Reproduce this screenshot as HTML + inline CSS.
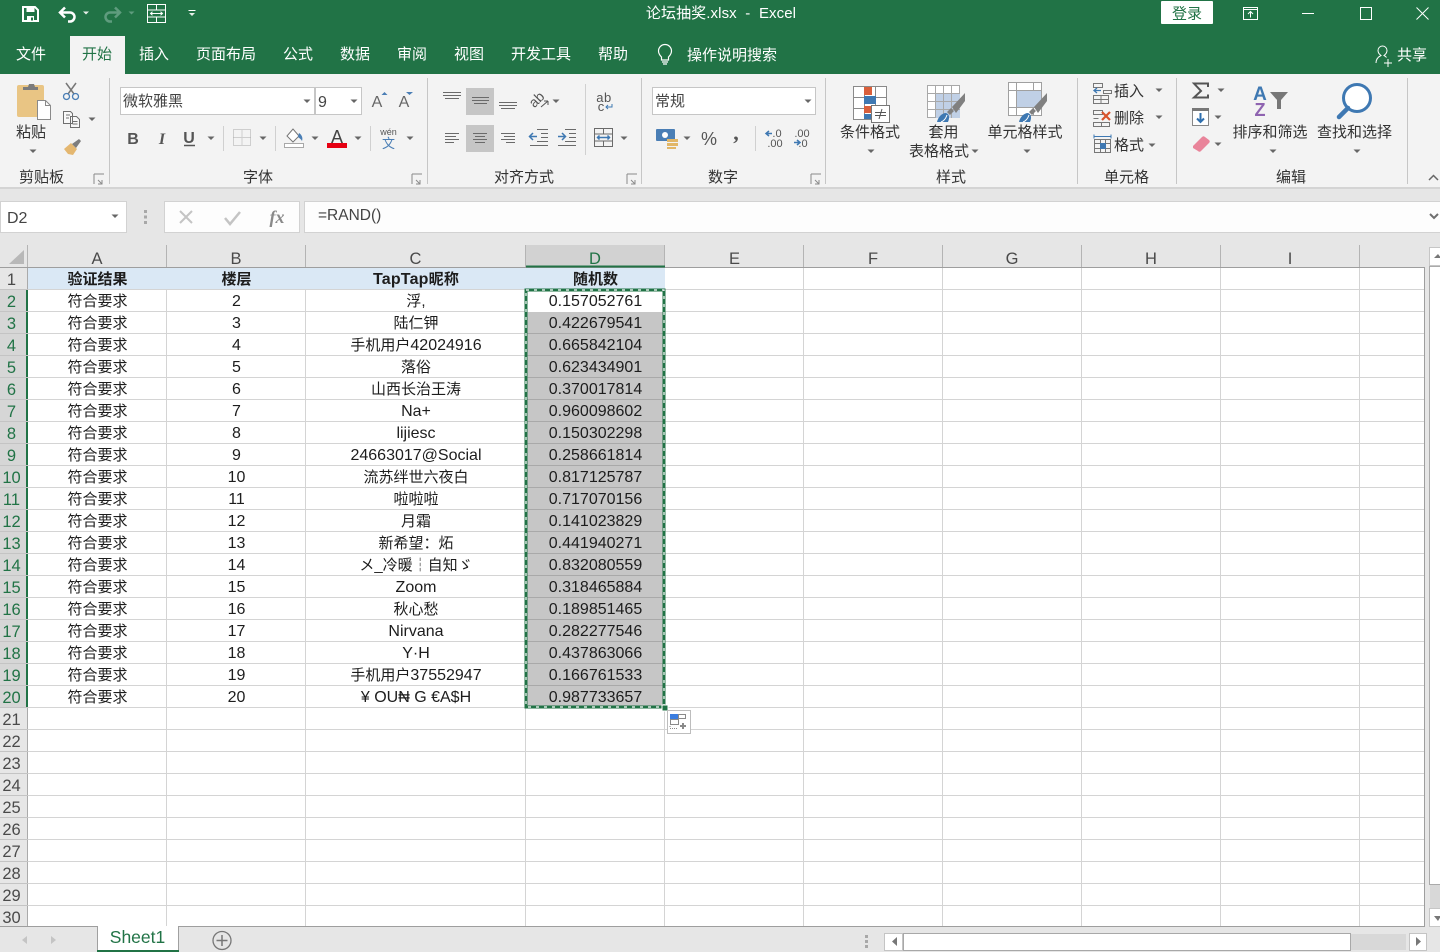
<!DOCTYPE html>
<html lang="zh"><head><meta charset="utf-8"><title>论坛抽奖.xlsx - Excel</title>
<style>
html,body{margin:0;padding:0;width:1440px;height:952px;overflow:hidden;background:#e6e6e6}
body{position:relative;font-family:"Liberation Sans","Noto Sans CJK SC",sans-serif}
div,table,svg{position:absolute}
#green{left:0;top:0;width:1440px;height:74px;background:#217346}
#ribbon{left:0;top:74px;width:1440px;height:113px;background:#f3f3f3;border-bottom:2px solid #d4d4d4}
#grid{left:28px;top:268px;width:1397px;height:659px;background-color:#fff;
background-image:linear-gradient(#d4d4d4,#d4d4d4),linear-gradient(#d4d4d4,#d4d4d4),linear-gradient(#d4d4d4,#d4d4d4),linear-gradient(#d4d4d4,#d4d4d4),linear-gradient(#d4d4d4,#d4d4d4),linear-gradient(#d4d4d4,#d4d4d4),linear-gradient(#d4d4d4,#d4d4d4),linear-gradient(#d4d4d4,#d4d4d4),linear-gradient(#d4d4d4,#d4d4d4),repeating-linear-gradient(to bottom,transparent 0,transparent 21px,#d4d4d4 21px,#d4d4d4 22px);
background-size:1px 100%,1px 100%,1px 100%,1px 100%,1px 100%,1px 100%,1px 100%,1px 100%,1px 100%,100% 100%;
background-position:138px 0,277px 0,497px 0,636px 0,775px 0,914px 0,1053px 0,1192px 0,1331px 0,0 0;background-repeat:no-repeat}
#bl{left:28px;top:268px;width:637px;height:21px;background:#dae8f5}
table{border-collapse:separate;border-spacing:0;table-layout:fixed}
#data{left:28px;top:268px;width:637px;color:#1d1d1d}
#data td{height:22px;padding:0;text-align:center;font-size:16px;line-height:21px;white-space:nowrap;overflow:hidden;box-sizing:border-box}
#data td.z,#data b{font-size:15px}
#data span{font-size:15px}
#data tr+tr td:nth-child(4){box-shadow:inset 0 -1px #a9a9a9;background:#c6c6c6}
#data tr:nth-child(2) td:nth-child(4){background:#fff;box-shadow:none}
#rh{left:0;top:0;width:28px;color:#4a4a4a}
#rh td{height:22px;padding:2px 5px 0 0;box-sizing:border-box;font-size:16.5px;line-height:20px;text-align:center;background:#e6e6e6;box-shadow:inset 0 -1px #c4c4c4,inset -1px 0 #aaa;overflow:visible;white-space:nowrap}
#rh tr.s td{background:#d6d6d6;color:#217346;box-shadow:inset 0 -1px #c4c4c4,inset -2px 0 #217346}
#clip{left:0;top:268px;width:28px;height:659px;overflow:hidden}
</style></head><body>
<div id="green"></div><div id="ribbon"></div>
<div id="grid"></div><div id="bl"></div>
<div id="clip"><table id="rh"><colgroup><col style="width:28px"></colgroup>
<tr><td>1</td></tr><tr class="s"><td>2</td></tr><tr class="s"><td>3</td></tr><tr class="s"><td>4</td></tr><tr class="s"><td>5</td></tr><tr class="s"><td>6</td></tr><tr class="s"><td>7</td></tr><tr class="s"><td>8</td></tr><tr class="s"><td>9</td></tr><tr class="s"><td>10</td></tr><tr class="s"><td>11</td></tr><tr class="s"><td>12</td></tr><tr class="s"><td>13</td></tr><tr class="s"><td>14</td></tr><tr class="s"><td>15</td></tr><tr class="s"><td>16</td></tr><tr class="s"><td>17</td></tr><tr class="s"><td>18</td></tr><tr class="s"><td>19</td></tr><tr class="s"><td>20</td></tr><tr><td>21</td></tr><tr><td>22</td></tr><tr><td>23</td></tr><tr><td>24</td></tr><tr><td>25</td></tr><tr><td>26</td></tr><tr><td>27</td></tr><tr><td>28</td></tr><tr><td>29</td></tr><tr><td>30</td></tr>
</table></div>
<table id="data"><colgroup><col style="width:139px"><col style="width:139px"><col style="width:220px"><col style="width:139px"></colgroup>
<tr><td class="z"><b>验证结果</b></td><td class="z"><b>楼层</b></td><td><b style="font-size:16px;letter-spacing:.2px">TapTap<span>昵称</span></b></td><td class="z"><b>随机数</b></td></tr>
<tr><td class="z">符合要求</td><td>2</td><td><span>浮,</span></td><td>0.157052761</td></tr>
<tr><td class="z">符合要求</td><td>3</td><td><span>陆仁钾</span></td><td>0.422679541</td></tr>
<tr><td class="z">符合要求</td><td>4</td><td><span>手机用户</span>42024916</td><td>0.665842104</td></tr>
<tr><td class="z">符合要求</td><td>5</td><td><span>落俗</span></td><td>0.623434901</td></tr>
<tr><td class="z">符合要求</td><td>6</td><td><span>山西长治王涛</span></td><td>0.370017814</td></tr>
<tr><td class="z">符合要求</td><td>7</td><td>Na+</td><td>0.960098602</td></tr>
<tr><td class="z">符合要求</td><td>8</td><td>lijiesc</td><td>0.150302298</td></tr>
<tr><td class="z">符合要求</td><td>9</td><td>24663017@Social</td><td>0.258661814</td></tr>
<tr><td class="z">符合要求</td><td>10</td><td><span>流苏绊世六夜白</span></td><td>0.817125787</td></tr>
<tr><td class="z">符合要求</td><td>11</td><td><span>啦啦啦</span></td><td>0.717070156</td></tr>
<tr><td class="z">符合要求</td><td>12</td><td><span>月霜</span></td><td>0.141023829</td></tr>
<tr><td class="z">符合要求</td><td>13</td><td><span>新希望：炻</span></td><td>0.441940271</td></tr>
<tr><td class="z">符合要求</td><td>14</td><td><span>メ_冷暖┆自知ゞ</span></td><td>0.832080559</td></tr>
<tr><td class="z">符合要求</td><td>15</td><td>Zoom</td><td>0.318465884</td></tr>
<tr><td class="z">符合要求</td><td>16</td><td><span>秋心愁</span></td><td>0.189851465</td></tr>
<tr><td class="z">符合要求</td><td>17</td><td>Nirvana</td><td>0.282277546</td></tr>
<tr><td class="z">符合要求</td><td>18</td><td>Y·H</td><td>0.437863066</td></tr>
<tr><td class="z">符合要求</td><td>19</td><td><span>手机用户</span>37552947</td><td>0.166761533</td></tr>
<tr><td class="z">符合要求</td><td>20</td><td>¥ OU₦ G €A$H</td><td>0.987733657</td></tr>
</table>
<svg width="1440" height="952" viewBox="0 0 1440 952" style="left:0;top:0" font-family="'Liberation Sans','Noto Sans CJK SC',sans-serif">
<defs>
<path id="c" d="M-3.5-1.5h7L0 2z" fill="#666"/>
<path id="cw" d="M-3-1.5h6L0 1.5z" fill="#e8efe9"/>
<path id="dl" d="M-5-5h10M-5-5v10M-1 1l4 4M3 1v4H-1" stroke="#8a8a8a" stroke-width="1" fill="none"/>
</defs>

<!-- Title bar icons -->
<path d="M23 7h12l3 3v11H23z" fill="none" stroke="#fff" stroke-width="2"/><path d="M26.500 7h8v5h-8zM27 16h7v5h-7z" fill="#fff"/><path d="M31 17.500h2v3h-2z" fill="#217346"/>
<path d="M60 12.500h10a4.500 4.500 0 0 1 0 9h-2M65 7.500l-5 5 5 5" fill="none" stroke="#fff" stroke-width="2.500"/>
<use href="#cw" x="86" y="13"/>
<path d="M120 12.500h-10a4.500 4.500 0 0 0 0 9h2M115 7.500l5 5-5 5" fill="none" stroke="#5f9c7e" stroke-width="2.500"/>
<path d="M128.500 11.500h6L131.500 14.500z" fill="#5f9c7e"/>
<path d="M147.500 4.500h18v18h-18zM147.500 10h18M147.500 17h18M156.500 4.500v5.500M156.500 17v5.500M151 13.500h11M152.500 11.800l-2 1.700 2 1.700M160.500 11.800l2 1.700-2 1.700" fill="none" stroke="#fff" stroke-width="1"/>
<path d="M188.500 10.500h7" stroke="#fff"/><use href="#cw" x="192" y="14.500"/>
<text x="721" y="18" fill="#fff" font-size="15" text-anchor="middle" letter-spacing=".1">论坛抽奖.xlsx&#160;&#160;-&#160;&#160;Excel</text>
<rect x="1161" y="1" width="52" height="23" rx="1" fill="#fff"/>
<text x="1187" y="18.500" fill="#217346" font-size="15" text-anchor="middle">登录</text>
<path d="M1243.500 7.500h14v12h-14zM1243.500 9.500h14M1250.500 17.500v-6M1248 14l2.500-2.500 2.500 2.500" fill="none" stroke="#fff"/>
<path d="M1302 13.500h12" stroke="#fff"/>
<path d="M1360.500 7.500h11v12h-11z" fill="none" stroke="#fff"/>
<path d="M1416.500 7.500l12 12M1428.500 7.500l-12 12" stroke="#fff" fill="none"/>

<!-- Tabs -->
<rect x="70" y="36" width="55" height="38" fill="#f3f3f3"/>
<g fill="#fff" font-size="15" text-anchor="middle">
<text x="31" y="59">文件</text><text x="97" y="59" fill="#217346">开始</text><text x="154" y="59">插入</text><text x="226" y="59">页面布局</text><text x="298" y="59">公式</text><text x="355" y="59">数据</text><text x="412" y="59">审阅</text><text x="469" y="59">视图</text><text x="541" y="59">开发工具</text><text x="613" y="59">帮助</text><text x="732" y="60">操作说明搜索</text><text x="1412" y="60">共享</text>
</g>
<path d="M661.500 57c-2-2-3-3.500-3-6a6.500 6.500 0 0 1 13 0c0 2.500-1 4-3 6v3h-7zM662 62h6M663 64h4" fill="none" stroke="#fff" stroke-width="1.200"/>
<path d="M1376 63c0-4 2-6 5-7.500-2-1.500-3-3-3-5a4.500 4.500 0 0 1 9 0c0 2-1 3.500-3 5 1 .5 2 1 2.500 2M1388 59v8M1384 63h8" fill="none" stroke="#fff" stroke-width="1"/>

<!-- Ribbon separators -->
<path d="M109.500 78v106M427.500 78v106M641.500 78v106M825.500 78v106M1077.500 78v106M1176.500 78v106M1407.500 78v106" stroke="#c6c6c6"/>
<path d="M223.500 126v25M275.500 126v25M370.500 126v25M585.500 84v71M755.500 126v25" stroke="#d0d0d0"/>

<!-- Group labels -->
<g fill="#333" font-size="15" text-anchor="middle">
<text x="41.500" y="182">剪贴板</text><text x="258" y="182">字体</text><text x="524" y="182">对齐方式</text><text x="723" y="182">数字</text><text x="951" y="182">样式</text><text x="1126.500" y="182">单元格</text><text x="1291" y="182">编辑</text>
<text x="31" y="137">粘贴</text>
<text x="870" y="137">条件格式</text><text x="943.500" y="137">套用</text><text x="939" y="156">表格格式</text><text x="1025" y="137">单元格样式</text>
<text x="1129" y="96">插入</text><text x="1129" y="123">删除</text><text x="1129" y="150">格式</text>
<text x="1270" y="137">排序和筛选</text><text x="1354.500" y="137">查找和选择</text>
</g>
<use href="#dl" x="99" y="179"/><use href="#dl" x="417" y="179"/><use href="#dl" x="632" y="179"/><use href="#dl" x="816" y="179"/>
<path d="M1429 180l4.500-4.500 4.500 4.500" fill="none" stroke="#666" stroke-width="1.500"/>

<!-- Clipboard -->
<rect x="17" y="85" width="27" height="32" rx="2" fill="#e9c584"/>
<path d="M23 87h5l1-3h5l1 3h3v3H23z" fill="#7b7b7b"/>
<path d="M37.500 100.500h8l5 5v14h-13z" fill="#fff" stroke="#8a8a8a"/><path d="M45.500 100.500v5h5" fill="none" stroke="#8a8a8a"/>
<use href="#c" x="33" y="151"/>
<path d="M66 83l8 11M76 83l-8 11" stroke="#777" stroke-width="1.500" fill="none"/>
<circle cx="66.500" cy="96.500" r="3" fill="none" stroke="#4a7eb5" stroke-width="1.300"/><circle cx="75.500" cy="96.500" r="3" fill="none" stroke="#4a7eb5" stroke-width="1.300"/>
<path d="M63.500 111.500h7l2 2v10h-9zM70.500 116.500h6l3 3v8h-9zM66 115h4M66 118h3M72.500 121.500h5M72.500 124h5" fill="#f8f8f8" stroke="#6f6f6f" stroke-width="1"/>
<use href="#c" x="92" y="119"/>
<path d="M64 149l7-6 6 6-4 6-5-1z" fill="#e4b770"/><path d="M72 144l7-5 2 2-5 7z" fill="#7d7d7d"/>

<!-- Font -->
<rect x="120.500" y="87.500" width="194" height="27" fill="#fff" stroke="#c6c6c6"/>
<rect x="315.500" y="87.500" width="46" height="27" fill="#fff" stroke="#c6c6c6"/>
<text x="123" y="106" font-size="15" fill="#444">微软雅黑</text>
<text x="318" y="107" font-size="16" fill="#444">9</text>
<use href="#c" x="307" y="101"/><use href="#c" x="354" y="101"/>
<text x="377" y="107" font-size="16" fill="#666" text-anchor="middle">A</text><path d="M381.500 95l3-3 3 3z" fill="#4a7eb5"/>
<text x="404" y="107" font-size="16" fill="#666" text-anchor="middle">A</text><path d="M406 92h7l-3.500 3z" fill="#4a7eb5"/>
<text x="133" y="144" font-size="16" font-weight="bold" fill="#555" text-anchor="middle">B</text>
<text x="162" y="144" font-size="16" font-weight="bold" font-style="italic" font-family="Liberation Serif" fill="#555" text-anchor="middle">I</text>
<text x="189" y="143" font-size="16" font-weight="bold" fill="#555" text-anchor="middle">U</text><path d="M184 145.500h11" stroke="#555" stroke-width="1.500"/>
<use href="#c" x="211" y="138"/>
<path d="M233.500 129.500h17v16h-17zM242 129.500v16M233.500 137.500h17" fill="none" stroke="#aaa" stroke-dasharray="1 1"/>
<use href="#c" x="263" y="138"/>
<path d="M287 136l6-7 6 7-6 6z" fill="#fff" stroke="#777"/><path d="M299 133c3 2 4 5 3 8-1-2-3-3-4-4z" fill="#4a7eb5"/>
<rect x="284.500" y="143.500" width="19" height="4" fill="#fff" stroke="#a8a8a8"/>
<use href="#c" x="315" y="138"/>
<text x="337" y="143" font-size="18" fill="#444" text-anchor="middle">A</text><rect x="327" y="143" width="20" height="5" fill="#e60012"/>
<use href="#c" x="358" y="138"/>
<text x="388.500" y="135" font-size="9" fill="#555" text-anchor="middle">wén</text><text x="388.500" y="148" font-size="13" fill="#4a7eb5" text-anchor="middle">文</text>
<use href="#c" x="410" y="138"/>

<!-- Alignment -->
<rect x="466" y="88" width="28" height="27" fill="#c6c6c6"/><rect x="466" y="125" width="28" height="27" fill="#c6c6c6"/>
<g stroke="#6a6a6a" fill="none">
<path d="M443 92.500h18M443 95.500h18M445 98.500h14"/>
<path d="M472 97.500h17M472 100.500h17M474 103.500h13"/>
<path d="M499 102.500h18M499 105.500h18M501 108.500h14"/>
<path d="M445 133.500h14M445 136.500h11M445 139.500h14M445 142.500h9"/>
<path d="M473 133.500h14M475 136.500h10M473 139.500h14M475 142.500h10"/>
<path d="M501 133.500h14M504 136.500h11M501 139.500h14M506 142.500h9"/>
<path d="M537 130.500h11M541 134.500h7M541 138.500h7M537 142.500h11M530 146.500h18" transform="translate(0 -1)"/>
<path d="M565 130.500h11M569 134.500h7M569 138.500h7M565 142.500h11M558 146.500h18" transform="translate(0 -1)"/>
<path d="M594.500 128.500h18v18h-18zM594.500 134h18M594.500 141h18M603.500 128.500v5.500M603.500 141v5.500"/>
</g>
<path d="M530 136.500h7M533 133l-3.500 3.500 3.500 3.500M558 136.500h7M562 133l3.500 3.500-3.500 3.500M597 137.500h13M599.500 135.500l-2 2 2 2M607.500 135.500l2 2-2 2" fill="none" stroke="#3e78b2" stroke-width="1.500"/>
<text x="537" y="104" font-size="14" fill="#555" text-anchor="middle" transform="rotate(-45 537 100)">ab</text><path d="M541 108l7-6M548 102h-4M548 102v4" stroke="#555" fill="none" transform="translate(0 -1)"/>
<use href="#c" x="556" y="101"/>
<text x="604" y="102" font-size="13" fill="#555" text-anchor="middle" letter-spacing=".5">ab</text><text x="601" y="111" font-size="13" fill="#555" text-anchor="middle">c</text>
<path d="M612 104v3h-6M608 105l-2 2 2 2" stroke="#3e78b2" fill="none"/>
<use href="#c" x="624" y="138"/>

<!-- Number -->
<rect x="652.500" y="87.500" width="163" height="27" fill="#fff" stroke="#c6c6c6"/>
<text x="655" y="106" font-size="15" fill="#444">常规</text><use href="#c" x="808" y="101"/>
<rect x="656" y="129" width="19" height="12" rx="1" fill="#4a7eb5"/><circle cx="665" cy="135" r="3" fill="#fff"/>
<path d="M667 139h11v3h-11zM667 143h11v3h-11zM667 147h9v2h-9z" fill="#e2b768"/>
<use href="#c" x="687" y="138"/>
<text x="709" y="145" font-size="18" fill="#555" text-anchor="middle">%</text>
<text x="736" y="140" font-size="22" font-weight="bold" font-family="Liberation Serif" fill="#555" text-anchor="middle">,</text>
<g font-size="11" fill="#555" text-anchor="middle"><text x="777" y="137">.0</text><text x="775" y="147">.00</text><text x="802" y="137">.00</text><text x="803" y="147">.0</text></g>
<path d="M772 133.500h-6M769 131l-3 2.500 3 2.500M794 142.500h6M797 140l3 2.500-3 2.500" fill="none" stroke="#3e78b2" stroke-width="1.500"/>

<!-- Styles: conditional formatting -->
<path d="M853.500 86.500h33v33h-33zM853.500 97.500h33M853.500 108.500h33M864.500 86.500v33M875.500 86.500v33" fill="#fff" stroke="#8a8a8a"/>
<path d="M864 87h8v8h-8zM864 106h8v7h-8z" fill="#d95f3b"/><path d="M864 96h12v8h-12zM864 114h8v5h-8z" fill="#3e78b2"/>
<rect x="871.500" y="105.500" width="18" height="17" fill="#fff" stroke="#777"/>
<path d="M875 112.500h11M875 115.500h11M882 109l-3 10" stroke="#555" fill="none"/>
<use href="#c" x="871" y="151"/>
<!-- table format -->
<path d="M927.500 85.500h32v32h-32zM927.500 93.500h32M927.500 101.500h32M927.500 109.500h32M935.500 85.500v32M943.500 85.500v32M951.500 85.500v32" fill="#fff" stroke="#a8a8a8"/>
<rect x="936" y="94" width="24" height="24" fill="#c0d0e6"/>
<path d="M936 101.500h24M936 109.500h24M943.500 94v24M951.500 94v24" stroke="#a8a8a8"/>
<path d="M937 122c1-5 5-9 9-9 3 1 4 4 2 9z" fill="#3e78b2"/>
<path d="M941 122c3-1 5-4 6-7" stroke="#fff" fill="none"/>
<path d="M947 112l4-4 3 3-4 4zM952 107l13-14v8l-9 12z" fill="#808080"/>
<use href="#c" x="975" y="151"/>
<!-- cell styles -->
<path d="M1008.500 82.500h33v33h-33zM1008.500 90.500h33M1008.500 107.500h33M1016.500 82.500v33M1033.500 82.500v33" fill="#fff" stroke="#a0a0a0"/>
<rect x="1017" y="91" width="24" height="16" fill="#c0d0e6"/>
<path d="M1019 122c1-5 5-9 9-9 3 1 4 4 2 9z" fill="#3e78b2"/><path d="M1023 122c3-1 5-4 6-7" stroke="#fff" fill="none"/>
<path d="M1029 112l4-4 3 3-4 4zM1034 107l13-14v8l-9 12z" fill="#808080"/>
<use href="#c" x="1027" y="151"/>

<!-- Cells -->
<g fill="none" stroke="#777">
<path d="M1093.500 83.500h9v4h-9zM1103.500 90.500h8v3h-8zM1093.500 95.500h15v4h-15zM1101 95.500v4M1093.500 99.500v4h15v-4M1101 99.500v4"/>
<path d="M1093.500 110.500h9v4h-9zM1093.500 122.500h16v4h-16zM1101.500 122.500v4M1093.500 118.500h5"/>
<path d="M1094.500 139.500h16v13h-16zM1094.500 143.500h16M1094.500 148.500h16M1100.500 139.500v13M1105.500 139.500v13"/>
</g>
<path d="M1101 90.500h-7M1097 88l-3 2.500 3 2.500" fill="none" stroke="#3e78b2" stroke-width="1.300"/>
<path d="M1102 112l8 8M1110 112l-8 8" stroke="#d8532b" stroke-width="2.200" fill="none"/>
<path d="M1094 136.500h17M1094 134.500v4M1111 134.500v4" stroke="#3e78b2" fill="none"/><rect x="1100" y="143" width="6" height="6" fill="#3e78b2"/>
<use href="#c" x="1159" y="90"/><use href="#c" x="1159" y="117"/><use href="#c" x="1152" y="145"/>

<!-- Editing -->
<path d="M1208 87v-3.500h-14l7 7.500-7 6.500h14v-3" fill="none" stroke="#555" stroke-width="2"/>
<use href="#c" x="1221" y="90"/>
<path d="M1192.500 108.500h16v17h-16z" fill="#fff" stroke="#888"/><path d="M1192 108h17v3h-17z" fill="#777"/><path d="M1200.500 113v9M1197 118.500l3.500 3.500 3.500-3.500" fill="none" stroke="#2f6fae" stroke-width="2"/>
<use href="#c" x="1218" y="117"/>
<path d="M1193 146l9-9c1-1 2-1 3 0l4 3c1 1 1 2 0 3l-8 8c-1 1-2 1-3 0l-5-3z" fill="#e9849a"/>
<use href="#c" x="1218" y="144"/>
<text x="1260" y="100" font-size="19" font-weight="bold" fill="#3e78b2" text-anchor="middle">A</text><text x="1260" y="116" font-size="18" font-weight="bold" fill="#8e63b0" text-anchor="middle">Z</text>
<path d="M1270 92h18l-7 8v9h-4v-9z" fill="#777"/><path d="M1276 99v8" stroke="#f3f3f3"/>
<use href="#c" x="1273" y="151"/>
<circle cx="1357" cy="98" r="13.500" fill="#fff" stroke="#3e78b2" stroke-width="3"/>
<path d="M1348 108l-9 9" stroke="#3e78b2" stroke-width="4.500" stroke-linecap="round"/>
<use href="#c" x="1357" y="151"/>

<!-- Formula bar -->
<rect x="0.500" y="201.500" width="126" height="31" fill="#fff" stroke="#d2d2d2"/>
<text x="7" y="223" font-size="16" fill="#444">D2</text><use href="#c" x="115" y="216"/>
<path d="M144 210h3v3h-3zM144 215.500h3v3h-3zM144 221h3v3h-3z" fill="#a8a8a8"/>
<rect x="164.500" y="201.500" width="135" height="31" fill="#fdfdfd" stroke="#d2d2d2"/>
<rect x="304.500" y="201.500" width="1140" height="31" fill="#fdfdfd" stroke="#d2d2d2"/>
<path d="M180 211l12 12M192 211l-12 12" stroke="#c4c4c4" stroke-width="2" fill="none"/>
<path d="M225 218l5 6 10-12" stroke="#c4c4c4" stroke-width="2.500" fill="none"/>
<text x="277" y="223" font-size="18" font-style="italic" font-weight="bold" font-family="Liberation Serif" fill="#8a8a8a" text-anchor="middle">fx</text>
<text x="318" y="220" font-size="15.500" fill="#444">=RAND()</text>
<path d="M1430 214l4 4 4-4" fill="none" stroke="#6f6f6f" stroke-width="2"/>

<!-- Column headers -->
<rect x="526" y="245" width="139" height="22" fill="#d2d2d2"/>
<path d="M27.500 245v22M166.500 245v22M305.500 245v22M525.500 245v22M664.500 245v22M803.500 245v22M942.500 245v22M1081.500 245v22M1220.500 245v22M1359.500 245v22" stroke="#b4b4b4"/>
<path d="M24 250v14H9z" fill="#b8b8b8"/>
<path d="M0 267.500h1425" stroke="#9e9e9e"/>
<path d="M526 266.500h139" stroke="#217346" stroke-width="2"/>
<g font-size="16.500" fill="#4a4a4a" text-anchor="middle">
<text x="97" y="264">A</text><text x="236" y="264">B</text><text x="415.500" y="264">C</text><text x="595" y="264" fill="#217346">D</text><text x="734.500" y="264">E</text><text x="873" y="264">F</text><text x="1012" y="264">G</text><text x="1151" y="264">H</text><text x="1290" y="264">I</text>
</g>
<path d="M1424.500 267v660" stroke="#9e9e9e"/>

<!-- Selection -->
<rect x="526" y="290" width="138" height="417" fill="none" stroke="#217346" stroke-width="3"/>
<rect x="526" y="290" width="138" height="417" fill="none" stroke="#fff" stroke-width="1.200" stroke-dasharray="3 5"/>
<rect x="662" y="705" width="6" height="6" fill="#217346" stroke="#fff"/>
<rect x="667.500" y="710.500" width="23" height="23" fill="#fff" stroke="#bdbdbd"/>
<rect x="670" y="714" width="8" height="5" fill="#3b7de0"/>
<path d="M678.500 714.500h7v4h-7zM670.500 719.500h8v5h-8z" fill="none" stroke="#8a8a8a"/>
<path d="M670 728.500h8M670 726v2" stroke="#8a8a8a" stroke-dasharray="1 1" fill="none"/>
<path d="M683 723v6M680 726h6" stroke="#8a8a8a" stroke-width="2"/>

<!-- Right scrollbar -->
<rect x="1425" y="268" width="15" height="659" fill="#e6e6e6"/>
<rect x="1429.500" y="247.500" width="12" height="18" fill="#fff" stroke="#c6c6c6"/>
<path d="M1434 258l4-4v4zM1438 254l3 4h-3z" fill="#777"/>
<rect x="1429.500" y="266.500" width="12" height="618" fill="#fff" stroke="#aaa"/>
<rect x="1430" y="885" width="10" height="23" fill="#d8d8d8"/>
<rect x="1429.500" y="908.500" width="12" height="18" fill="#fff" stroke="#c6c6c6"/>
<path d="M1434 916h7l-3 5z" fill="#777"/>

<!-- Bottom bar -->
<rect x="0" y="927" width="1440" height="25" fill="#e6e6e6"/>
<path d="M0 926.500h1425" stroke="#9e9e9e"/>
<rect x="98" y="926" width="80" height="24" fill="#fff"/>
<path d="M97.500 927v25M178.500 927v25" stroke="#a0a0a0"/>
<rect x="97" y="950" width="82" height="2" fill="#217346"/>
<text x="137.500" y="943" font-size="17.500" fill="#217346" text-anchor="middle">Sheet1</text>
<path d="M27 936l-5 4 5 4zM51 936l5 4-5 4z" fill="#c4c4c4"/>
<circle cx="222" cy="940.500" r="9" fill="none" stroke="#777" stroke-width="1.300"/><path d="M222 935v11M216.500 940.500h11" stroke="#777" stroke-width="1.500"/>
<path d="M865 935h3v3h-3zM865 940h3v3h-3zM865 945h3v3h-3z" fill="#a8a8a8"/>
<rect x="884.500" y="933.500" width="18" height="17" fill="#fff" stroke="#c4c4c4"/>
<path d="M897 937v9l-5-4.500z" fill="#777"/>
<rect x="1351" y="934" width="55" height="16" fill="#d8d8d8"/>
<rect x="903.500" y="933.500" width="447" height="17" fill="#fff" stroke="#a8a8a8"/>
<rect x="1409.500" y="933.500" width="17" height="17" fill="#fff" stroke="#c4c4c4"/>
<path d="M1416 937v9l5-4.500z" fill="#777"/>
</svg>
</body></html>
